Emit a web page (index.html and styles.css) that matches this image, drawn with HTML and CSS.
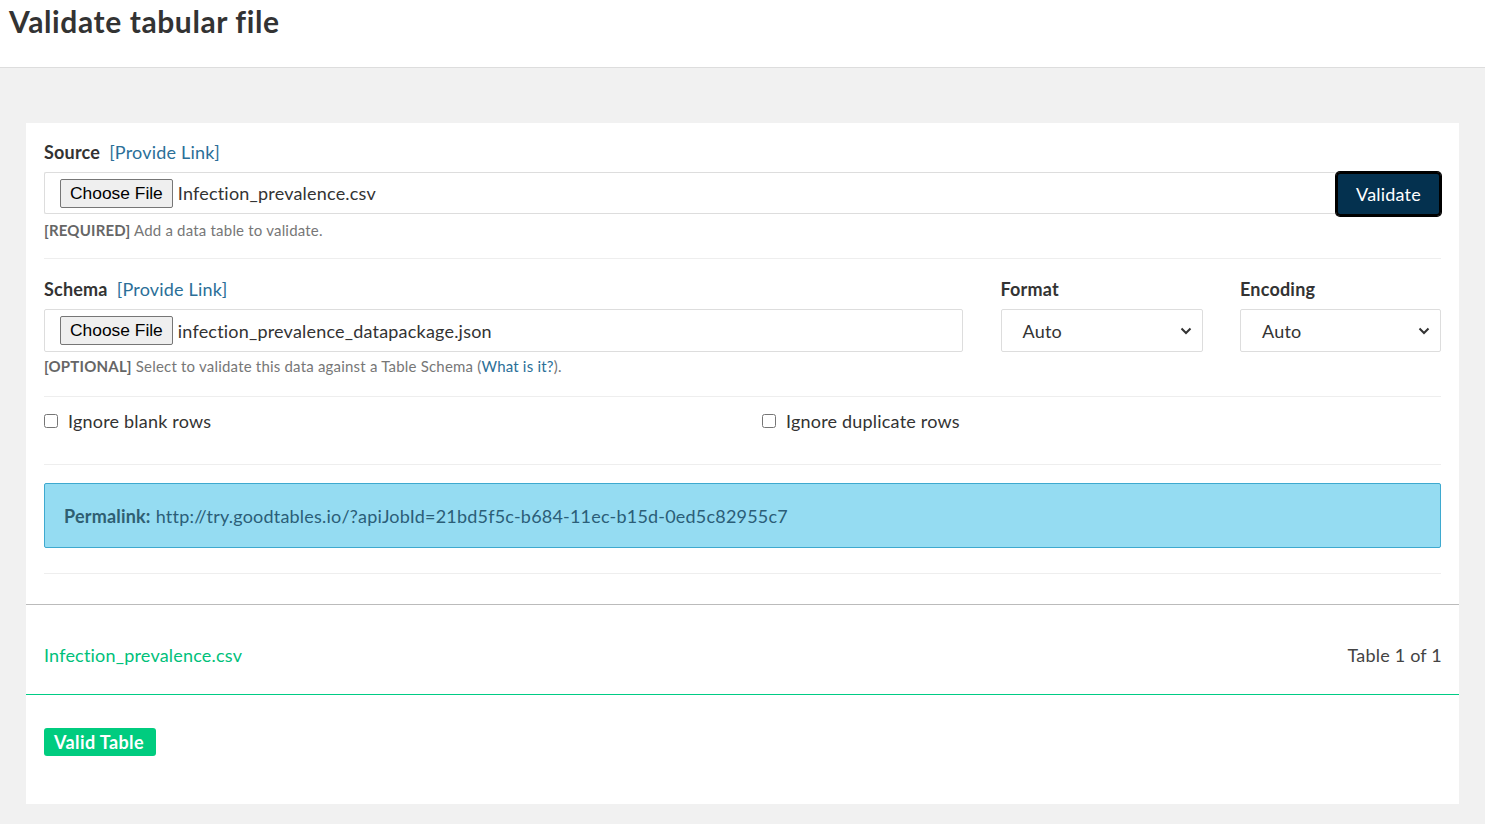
FILE: index.html
```html
<!DOCTYPE html>
<html lang="en">
<head>
<meta charset="utf-8">
<title>Validate tabular file</title>
<link rel="stylesheet" href="styles.css">
</head>
<body>
<header class="page-header">
  <h1 class="page-title">Validate tabular file</h1>
</header>
<main class="page-body">
  <section class="card">
    <div class="form-area">
      <div class="field">
        <div class="label-row"><span class="label">Source</span><a class="link" href="#">[Provide Link]</a></div>
        <div class="input-group">
          <div class="file-input">
            <span class="file-btn">Choose File</span>
            <span class="file-name">Infection_prevalence.csv</span>
          </div>
          <button class="validate-btn" type="button">Validate</button>
        </div>
        <p class="help"><strong>[REQUIRED]</strong> Add a data table to validate.</p>
      </div>
      <hr class="sep">
      <div class="schema-grid">
        <div class="field">
          <div class="label-row"><span class="label">Schema</span><a class="link" href="#">[Provide Link]</a></div>
          <div class="file-input">
            <span class="file-btn">Choose File</span>
            <span class="file-name">infection_prevalence_datapackage.json</span>
          </div>
          <p class="help"><strong>[OPTIONAL]</strong> Select to validate this data against a Table Schema (<a class="help-link" href="#">What is it?</a>).</p>
        </div>
        <div class="field">
          <div class="label-row"><span class="label">Format</span></div>
          <div class="select"><span>Auto</span>
            <svg class="chev" width="12" height="8" viewBox="0 0 12 8"><path d="M1.5 1.5 L6 6 L10.5 1.5" fill="none" stroke="#333" stroke-width="2"/></svg>
          </div>
        </div>
        <div class="field">
          <div class="label-row"><span class="label">Encoding</span></div>
          <div class="select"><span>Auto</span>
            <svg class="chev" width="12" height="8" viewBox="0 0 12 8"><path d="M1.5 1.5 L6 6 L10.5 1.5" fill="none" stroke="#333" stroke-width="2"/></svg>
          </div>
        </div>
      </div>
      <hr class="sep sep-b">
      <div class="checks">
        <label class="check"><input type="checkbox"> Ignore blank rows</label>
        <label class="check"><input type="checkbox"> Ignore duplicate rows</label>
      </div>
      <hr class="sep sep-c">
      <div class="alert"><strong>Permalink:</strong> http://try.goodtables.io/?apiJobId=21bd5f5c-b684-11ec-b15d-0ed5c82955c7</div>
      <hr class="sep sep-d">
    </div>
    <div class="report-head">
      <span class="report-file">Infection_prevalence.csv</span>
      <span class="report-count">Table 1 of 1</span>
    </div>
    <div class="report-body">
      <span class="badge">Valid Table</span>
    </div>
  </section>
</main>
</body>
</html>
```
FILE: styles.css
```css
* { box-sizing: border-box; }
html, body { margin: 0; padding: 0; }
body {
  font-family: "Lato", "Open Sans", sans-serif;
  color: #333;
  background: #f1f1f1;
  font-size: 18px;
  letter-spacing: 0.2px;
}
.page-header {
  background: #fff;
  height: 68px;
  border-bottom: 1px solid #ddd;
  padding: 0 9px;
}
.page-title {
  margin: 0;
  padding-top: 3px;
  font-size: 30px;
  font-weight: 700;
  line-height: 36px;
  letter-spacing: 0.6px;
  color: #333;
}
.page-body {
  padding: 55px 26px 20px 26px;
}
.card {
  background: #fff;
  padding-bottom: 48px;
}
.form-area {
  padding: 18px 18px 0 18px;
}
.label-row {
  display: flex;
  gap: 9px;
  align-items: baseline;
  height: 20px;
  margin-bottom: 11px;
}
.label {
  font-weight: 700;
  font-size: 18px;
  line-height: 22px;
}
.link {
  color: #2b6f98;
  text-decoration: none;
  font-size: 18px;
  line-height: 22px;
}
.input-group {
  display: flex;
  align-items: stretch;
}
.file-input {
  flex: 1;
  height: 42px;
  border: 1px solid #ddd;
  border-radius: 2px;
  display: flex;
  align-items: center;
  padding-left: 15px;
  gap: 5px;
}
.schema-grid .file-input { height: 43px; }
.input-group .file-input { border-right: none; }
.file-btn {
  font-family: "Liberation Sans", Arial, sans-serif;
  letter-spacing: 0;
  font-size: 17.4px;
  color: #000;
  background: #efefef;
  border: 1px solid #767676;
  border-radius: 2px;
  height: 29px;
  line-height: 27px;
  padding: 0 9px;
}
.file-name { font-size: 18px; color: #333; }
.validate-btn {
  width: 105px;
  height: 44px;
  margin-top: 0;
  background: #04314f;
  color: #fff;
  border: 1px solid #fff;
  outline: 2px solid #000;
  outline-offset: -2px;
  border-radius: 4px;
  font-family: inherit;
  letter-spacing: 0.2px;
  font-size: 18px;
  padding: 0;
  box-shadow: 0 0 0 1px #000;
}
.help {
  margin: 6px 0 0 0;
  font-size: 15px;
  line-height: 16px;
  color: #777;
}
.help strong { color: #666; }
.help-link { color: #2b6f98; text-decoration: none; }
.sep {
  border: none;
  border-top: 1px solid #eee;
  margin: 20px 0 19px 0;
}
.schema-grid {
  display: grid;
  grid-template-columns: 1fr 202px 201px;
  column-gap: 37.5px;
}
.select {
  height: 43px;
  border: 1px solid #ddd;
  border-radius: 2px;
  display: flex;
  align-items: center;
  justify-content: space-between;
  padding: 0 10px 0 21px;
  font-size: 18px;
  color: #333;
}
.sep-b { margin: 22px 0 0 0; }
.checks {
  display: grid;
  grid-template-columns: 718px 1fr;
  height: 67px;
  align-items: start;
  padding-top: 13px;
}
.check {
  display: flex;
  align-items: center;
  gap: 10px;
  font-size: 18px;
  line-height: 22px;
  color: #333;
}
.check input {
  margin: 0;
  width: 14px;
  height: 14px;
}
.sep-c { margin: 0 0 18px 0; }
.alert {
  height: 65px;
  background: #95dcf2;
  border: 1px solid #3ea9cf;
  border-radius: 2px;
  padding: 0 19px;
  display: flex;
  align-items: center;
  gap: 5px;
  color: #2b5e78;
  font-size: 18px;
}
.alert strong { color: #2f5f72; }
.sep-d { margin: 25px 0 30px 0; }
.report-head {
  border-top: 1px solid #bbb;
  border-bottom: 1px solid #00cc85;
  height: 91px;
  display: flex;
  align-items: flex-start;
  justify-content: space-between;
  padding: 39px 17px 0 18px;
  line-height: 22px;
}
.report-file { color: #00c07a; font-size: 18px; }
.report-count { color: #444; font-size: 18px; }
.report-body {
  padding: 33px 18px 0 18px;
}
.badge {
  display: inline-block;
  background: #00cc7f;
  color: #fff;
  font-weight: 700;
  font-size: 18px;
  letter-spacing: 0.4px;
  line-height: 28px;
  height: 28px;
  padding: 0 12px 0 10px;
  border-radius: 3px;
}
```
